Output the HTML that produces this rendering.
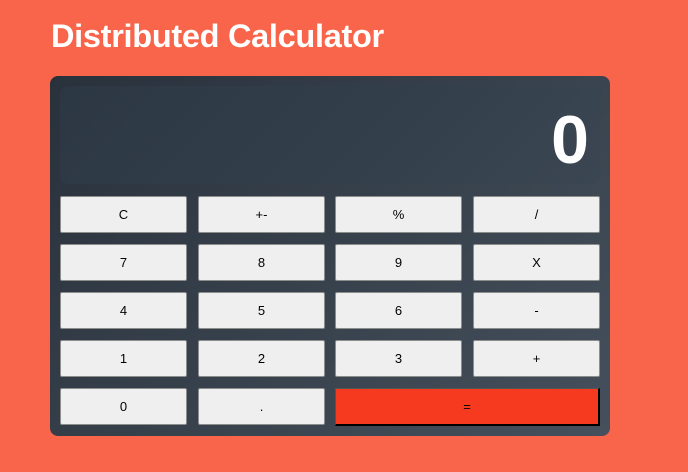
<!DOCTYPE html>
<html><head><meta charset="utf-8"><style>
html,body{margin:0;padding:0;}
body{width:688px;height:472px;background:#f9654a;font-family:"Liberation Sans",Arial,sans-serif;position:relative;overflow:hidden;}
h1{position:absolute;left:51px;top:16px;margin:0;font-size:32.5px;line-height:40px;font-weight:bold;color:#fff;letter-spacing:-0.3px;}
.calc{position:absolute;left:50px;top:76px;width:560px;height:360px;border-radius:8px;background:linear-gradient(135deg,#29313b 0%,#37414c 50%,#46505c 100%);}
.disp{position:absolute;left:10px;top:10px;width:540px;height:98px;border-radius:8px;background:linear-gradient(135deg,#2c3743 0%,#33404c 60%,#3b4652 100%);}
.disp span{position:absolute;right:11px;top:20px;font-size:68px;font-weight:bold;color:#fff;line-height:1;}
.b{position:absolute;width:127px;height:37px;box-sizing:border-box;background:#efefef;border:1px solid #8d8d8d;border-radius:2px;font-size:13px;color:#000;display:flex;align-items:center;justify-content:center;}
.eq{background:#f63a1f;border:2px solid;border-color:#555 #000 #000 #555;border-top-width:1px;border-left-width:1px;border-radius:0;}
</style></head><body>
<h1>Distributed Calculator</h1>
<div class="calc">
<div class="disp"><span>0</span></div>
<div class="b" style="left:10px;top:120px">C</div>
<div class="b" style="left:148px;top:120px">+-</div>
<div class="b" style="left:285px;top:120px">%</div>
<div class="b" style="left:423px;top:120px">/</div>
<div class="b" style="left:10px;top:168px">7</div>
<div class="b" style="left:148px;top:168px">8</div>
<div class="b" style="left:285px;top:168px">9</div>
<div class="b" style="left:423px;top:168px">X</div>
<div class="b" style="left:10px;top:216px">4</div>
<div class="b" style="left:148px;top:216px">5</div>
<div class="b" style="left:285px;top:216px">6</div>
<div class="b" style="left:423px;top:216px">-</div>
<div class="b" style="left:10px;top:264px">1</div>
<div class="b" style="left:148px;top:264px">2</div>
<div class="b" style="left:285px;top:264px">3</div>
<div class="b" style="left:423px;top:264px">+</div>
<div class="b" style="left:10px;top:312px">0</div>
<div class="b" style="left:148px;top:312px">.</div>
<div class="b eq" style="left:285px;top:312px;width:265px;height:38px">=</div>
</div>
</body></html>
